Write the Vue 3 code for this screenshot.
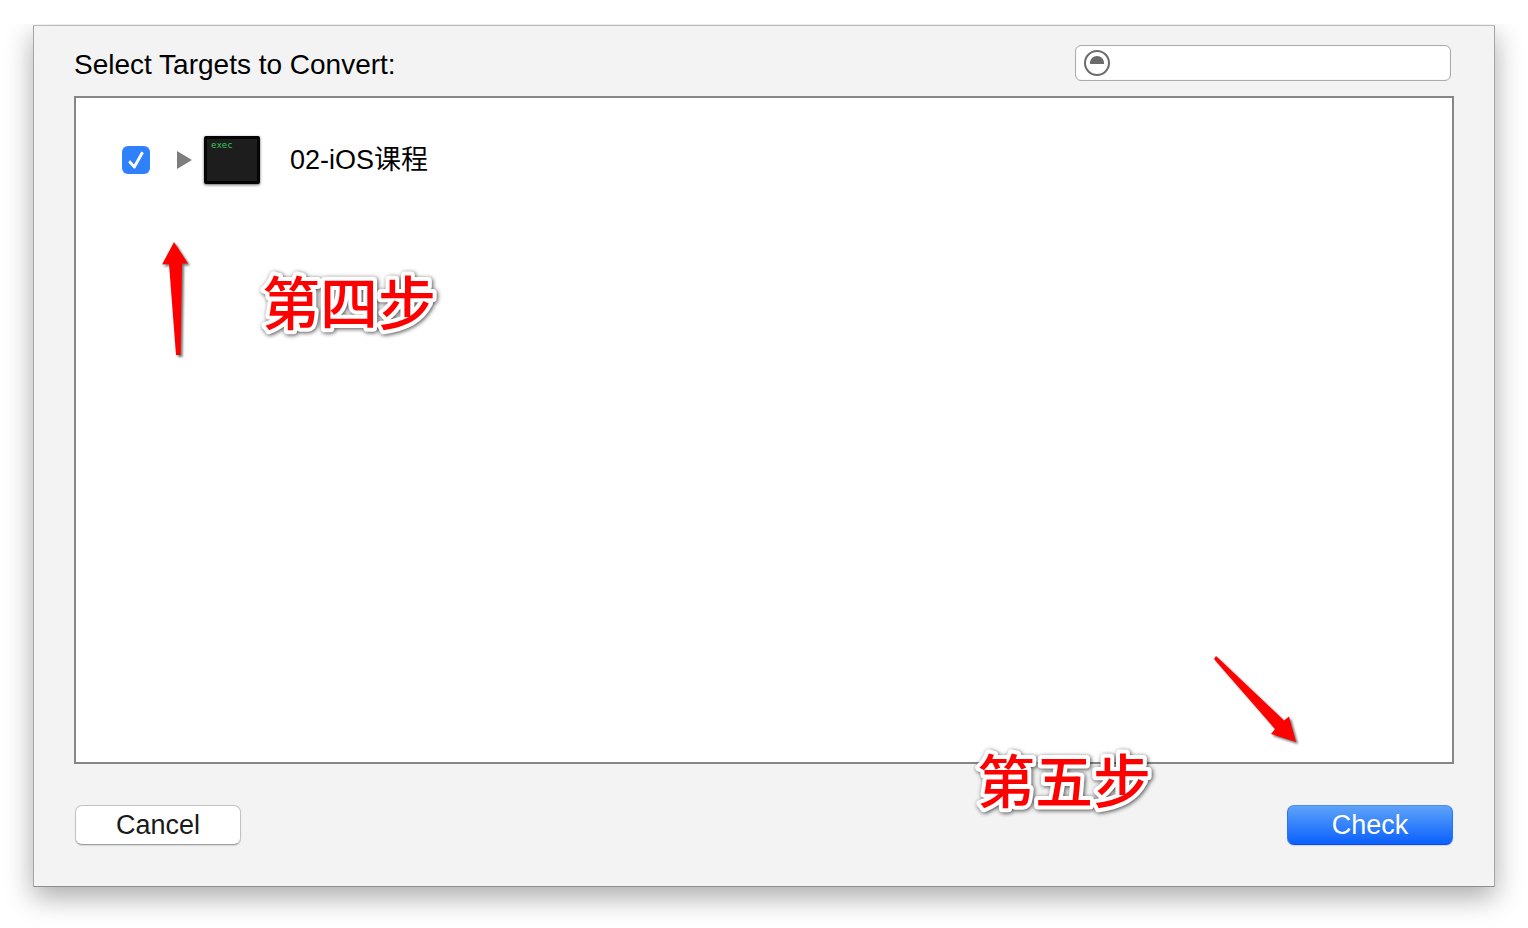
<script setup>
import { ref } from 'vue'

const filter = ref('')
const targets = ref([{ id: 'target-02', name: '02-iOS课程', checked: true }])
</script>

<template>
  <div class="page">
    <div class="stage">
      <main class="dialog">
        <header class="header">
          <h1 class="title">Select Targets to Convert:</h1>
          <div class="search">
            <svg class="search-icon" viewBox="0 0 26 26" aria-hidden="true">
              <circle cx="13" cy="13" r="12" fill="none" stroke="#6b6b6b" stroke-width="2" />
              <path d="M6 14V13C6 9 9 6 13 6S20 9 20 13V14Z" fill="#6b6b6b" />
            </svg>
            <input v-model="filter" class="search-input" type="text" aria-label="Filter targets" />
          </div>
        </header>

        <ul class="list">
          <li v-for="t in targets" :key="t.id" class="row">
            <input :id="t.id" v-model="t.checked" class="check" type="checkbox" />
            <button class="disclosure" type="button" aria-label="Expand">
              <svg viewBox="0 0 15 18" aria-hidden="true"><path d="M0 0L15 9L0 18Z" fill="#7d7d7d" /></svg>
            </button>
            <span class="exec">exec</span>
            <label class="name" :for="t.id">{{ t.name }}</label>
          </li>
        </ul>

        <footer class="footer">
          <button class="btn" type="button">Cancel</button>
          <button class="btn primary" type="button">Check</button>
        </footer>

        <svg class="arrow arrow-up" viewBox="0 0 40 130" aria-hidden="true">
          <path d="M19 7L33 28.5L27 28.5L25.5 120H21L14 29L7 29.5Z" fill="#f00" />
        </svg>
        <svg class="step step-four" viewBox="0 0 182 60"><text x="4" y="51">第四步</text></svg>
        <svg class="arrow arrow-down" viewBox="0 0 100 100" aria-hidden="true">
          <path d="M11 6L79 70.5L84 66.5L91 92L66 84L70 79L9 9Z" fill="#f00" />
        </svg>
        <svg class="step step-five" viewBox="0 0 182 60"><text x="4" y="51">第五步</text></svg>
      </main>
    </div>
  </div>
</template>

<style>
body {
  margin: 0;
  background: #fff;
}
</style>

<style scoped>
.page {
  box-sizing: border-box;
  display: flex;
  flex-direction: column;
  min-height: 100vh;
  padding-top: 24px;
  font-family: "Liberation Sans", "Noto Sans CJK SC", sans-serif;
  font-size: 27px;
  color: #000;
}
.stage {
  display: flex;
  flex: 1;
  overflow: hidden;
  padding: 1px 33px 41px;
}
.dialog {
  position: relative;
  box-sizing: border-box;
  display: flex;
  flex: 1;
  flex-direction: column;
  padding: 19px 40px 41px;
  border: 1px solid #a6a6a6;
  border-top-color: #bababa;
  border-bottom-color: #8e8e8e;
  border-radius: 1px;
  background: #f3f3f3;
  box-shadow: 0 10px 28px rgba(0, 0, 0, 0.34);
}
.header {
  display: flex;
  align-items: flex-end;
  justify-content: space-between;
  padding-right: 3px;
  margin-bottom: 15px;
}
.title {
  margin: 0;
  font-size: 28px;
  font-weight: 400;
  line-height: 32px;
}
.search {
  box-sizing: border-box;
  display: flex;
  align-items: center;
  gap: 8px;
  width: 376px;
  height: 36px;
  padding: 0 8px;
  border: 1px solid #ababab;
  border-radius: 6px;
  background: #fff;
  box-shadow: inset 0 0 1px #ccc;
}
.search-icon {
  flex: none;
  width: 26px;
  height: 26px;
}
.search-input {
  flex: 1;
  min-width: 0;
  padding: 0;
  border: 0;
  outline: 0;
  background: transparent;
  font: inherit;
  font-size: 24px;
}
.list {
  flex: 1;
  margin: 0;
  padding: 38px 46px;
  border: 2px solid #868686;
  background: #fff;
  list-style: none;
}
.row {
  display: flex;
  align-items: center;
  height: 48px;
}
.check {
  appearance: none;
  position: relative;
  width: 28px;
  height: 28px;
  margin: 0 27px 0 0;
  border: 1px solid #b0b0b0;
  border-radius: 6px;
  background: #fff;
}
.check:checked {
  border: 0;
  background: #2f81fb;
}
.check:checked::after {
  content: "";
  position: absolute;
  inset: 0;
  background: #fff;
  clip-path: polygon(22% 58%, 29% 51%, 43% 66%, 69% 20%, 78% 25%, 47% 80%, 42% 80%);
}
.disclosure {
  display: flex;
  width: 15px;
  height: 18px;
  margin: 0 12px 0 0;
  padding: 0;
  border: 0;
  background: none;
}
.exec {
  box-sizing: border-box;
  width: 56px;
  height: 48px;
  margin-right: 30px;
  padding-left: 4px;
  border: 3px solid #050505;
  border-radius: 2px;
  background: #1d1d1d;
  box-shadow: 0 1px 3px rgba(0, 0, 0, 0.6);
  color: #35c653;
  font: 9px/13px "DejaVu Sans Mono", monospace;
}
.name {
  line-height: 32px;
}
.footer {
  display: flex;
  justify-content: space-between;
  margin: 41px 1px 0;
}
.btn {
  width: 166px;
  height: 40px;
  padding: 0;
  border: 1px solid #c2c2c2;
  border-bottom-color: #a0a0a0;
  border-radius: 7px;
  background: #fff;
  box-shadow: 0 1px 1px rgba(0, 0, 0, 0.12);
  color: #1a1a1a;
  font: inherit;
}
.primary {
  border-color: #4a90f0 #2b74f5 #0a4af5;
  background: linear-gradient(#5ea3f9, #0b60fe);
  color: #fff;
}
.arrow {
  position: absolute;
  filter: drop-shadow(2px 2px 1px rgba(0, 0, 0, 0.55));
  pointer-events: none;
}
.arrow-up {
  top: 209px;
  left: 121px;
  width: 40px;
  height: 130px;
}
.arrow-down {
  right: 189px;
  bottom: 136px;
  width: 100px;
  height: 100px;
}
.step {
  position: absolute;
  width: 182px;
  height: 60px;
  overflow: visible;
  filter: drop-shadow(1px 1px 2px rgba(0, 0, 0, 0.7));
  pointer-events: none;
}
.step text {
  fill: #f00;
  stroke: #fff;
  stroke-width: 8px;
  stroke-linejoin: round;
  paint-order: stroke fill;
  font: 500 58px "Noto Sans CJK SC", sans-serif;
}
.step-four {
  top: 248px;
  left: 224px;
}
.step-five {
  right: 339px;
  bottom: 74px;
}
</style>
